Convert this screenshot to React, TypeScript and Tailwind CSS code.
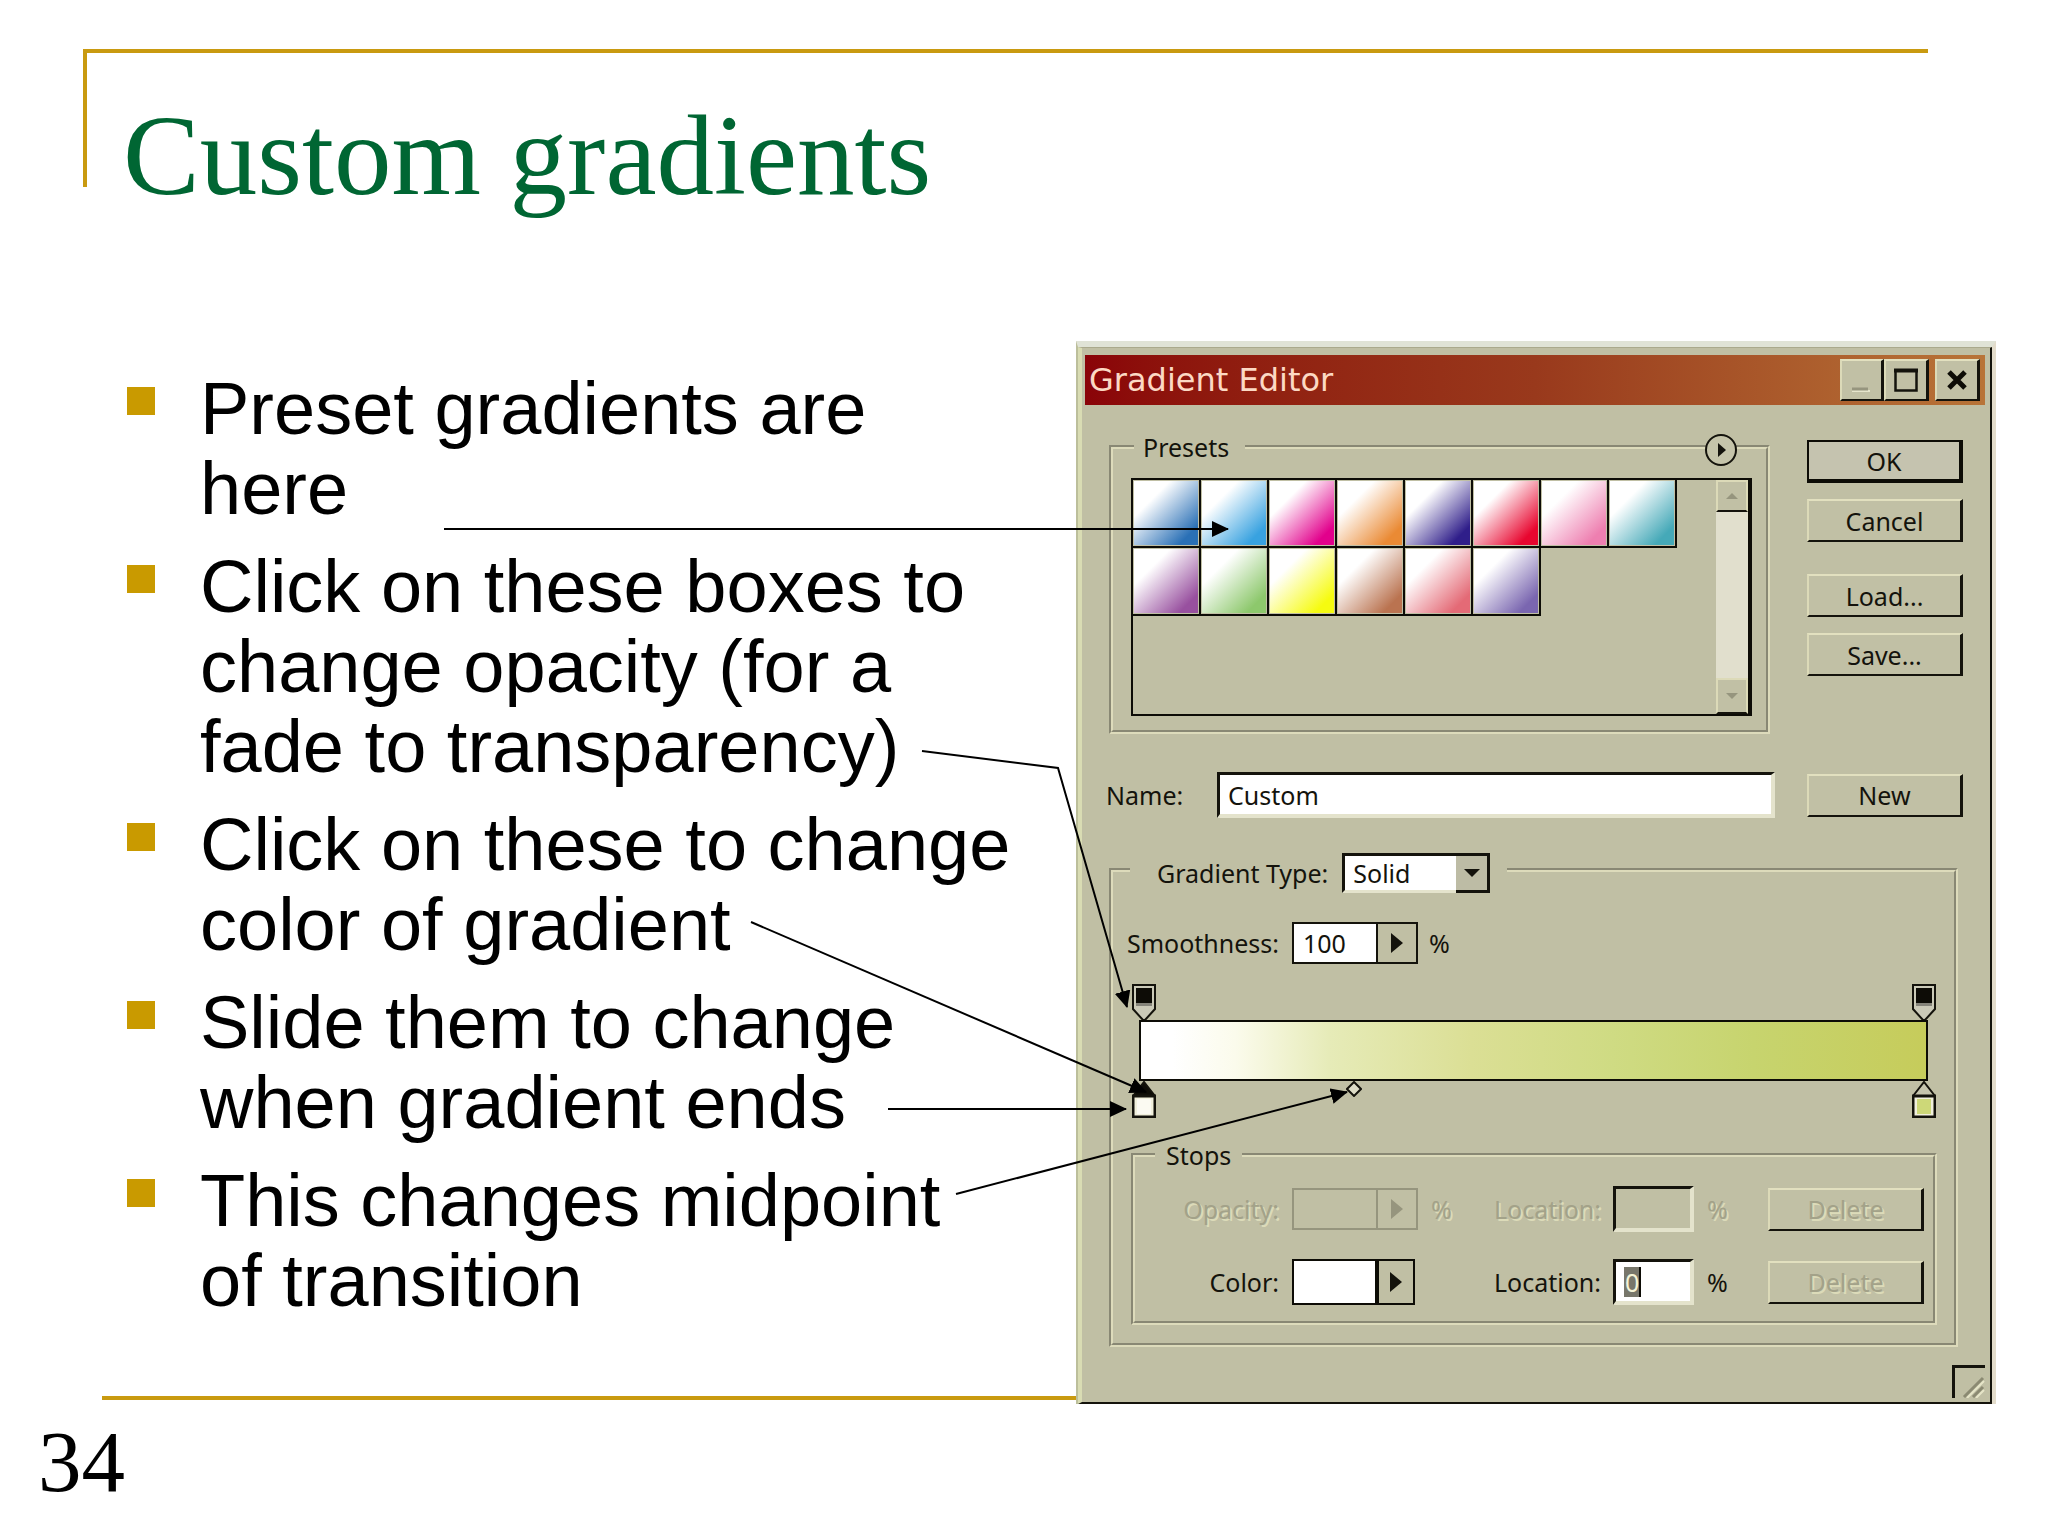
import React from "react";

// ─── Slide content ───────────────────────────────────────────────────────────

const BULLETS = [
  "Preset gradients are\nhere",
  "Click on these boxes to\nchange opacity (for a\nfade to transparency)",
  "Click on these to change\ncolor of gradient",
  "Slide them to change\nwhen gradient ends",
  "This changes midpoint\nof transition",
];

const PRESETS = [
  { name: "Blue", color: "#2a70b6" },
  { name: "Cyan", color: "#38a2e0" },
  { name: "Magenta", color: "#e2008c" },
  { name: "Orange", color: "#ea8a34" },
  { name: "Indigo", color: "#2f1e8a" },
  { name: "Red", color: "#e8062f" },
  { name: "Pink", color: "#ee7fb0" },
  { name: "Teal", color: "#45a9b8" },
  { name: "Purple", color: "#98509f" },
  { name: "Green", color: "#8dc86c" },
  { name: "Yellow", color: "#f6fb10" },
  { name: "Brown", color: "#ba7350" },
  { name: "Coral", color: "#e46a76" },
  { name: "Violet", color: "#7a66b0" },
];

// ─── Shared styles ───────────────────────────────────────────────────────────

const RAISED =
  "border-t-2 border-l-2 border-r-[3px] border-b-2 border-t-[#e2e0bf] border-l-[#dcdab8] border-r-[#14130c] border-b-[#14130c] bg-[#c1c0a5]";
const SUNKEN =
  "border-t-[3px] border-l-[3px] border-r-4 border-b-4 border-t-[#14130c] border-l-[#14130c] border-r-[#e4e3cc] border-b-[#e4e3cc]";
const GROOVE = "border-4 [border-style:groove] border-[#dddbbb]";
const DISABLED = "text-[#a3a289] [text-shadow:2px_2px_#dcdbb9]";

// ─── Small controls ──────────────────────────────────────────────────────────

const DialogButton: React.FC<{ label: string; primary?: boolean; disabled?: boolean }> = ({
  label,
  primary,
  disabled,
}) => (
  <button
    type="button"
    disabled={disabled}
    className={`flex h-[43px] w-[156px] items-center justify-center ${
      primary
        ? "border-t-2 border-r-4 border-b-4 border-l-2 border-[#0d0c06] bg-[#c5c3af]"
        : RAISED
    } ${disabled ? DISABLED : ""}`}
  >
    {label}
  </button>
);

const RightTriangle: React.FC<{ className?: string }> = ({ className = "h-5 w-3 fill-[#14130c]" }) => (
  <svg viewBox="0 0 12 20" className={className} aria-hidden="true">
    <path d="M0 0 L12 10 L0 20 Z" />
  </svg>
);

const OpacityStop: React.FC<{ label: string }> = ({ label }) => (
  <button type="button" aria-label={label} className="h-9 w-6">
    <svg viewBox="0 0 24 36" className="h-9 w-6">
      <path d="M1 1 H23 V25 L13 36 H11 L1 25 Z" fill="#cbcab8" stroke="#14130c" strokeWidth="2" />
      <rect x="4" y="4" width="16" height="15" fill="#0d0c06" />
      <rect x="4" y="19" width="16" height="3" fill="#85847a" />
    </svg>
  </button>
);

const ColorStop: React.FC<{ label: string; color: string; selected?: boolean }> = ({
  label,
  color,
  selected,
}) => (
  <button type="button" aria-label={label} className="h-[37px] w-6">
    <svg viewBox="0 0 24 37" className="h-[37px] w-6">
      <path
        d="M1 15 L12 1 L23 15 Z"
        fill={selected ? "#0d0c06" : "#c6c5ad"}
        stroke="#14130c"
        strokeWidth="2"
      />
      <rect x="1" y="15" width="22" height="21" fill="#f1f0dc" stroke="#14130c" strokeWidth="3" />
      <rect x="5" y="18" width="14" height="15" fill={color} />
    </svg>
  </button>
);

// ─── Gradient editor dialog ──────────────────────────────────────────────────

const TitleBar: React.FC = () => (
  <div className="flex h-[50px] items-center justify-between bg-linear-to-r from-[#8a0308] via-[#99391c] to-[#b87438] pr-[5px] pl-1">
    <h2 className="font-['DejaVu_Sans',sans-serif] text-[32px] leading-10 text-[#fcd9c4]">
      Gradient Editor
    </h2>
    <div className="flex">
      <button
        type="button"
        disabled
        aria-label="Minimize"
        className={`flex h-[42px] w-11 items-center justify-center ${RAISED}`}
      >
        <svg viewBox="0 0 24 24" className="h-6 w-6">
          <path d="M2 23 H20" stroke="#e6e5cc" strokeWidth="2" />
          <path d="M2 21 H18" stroke="#96957e" strokeWidth="3" />
        </svg>
      </button>
      <button
        type="button"
        aria-label="Maximize"
        className={`flex h-[42px] w-[45px] items-center justify-center ${RAISED}`}
      >
        <svg viewBox="0 0 24 24" className="h-6 w-6">
          <path d="M1.5 2 V22.5 H22.5 V2" fill="none" stroke="#14130c" strokeWidth="2.5" />
          <path d="M0 2.5 H24" stroke="#14130c" strokeWidth="4" />
        </svg>
      </button>
      <button
        type="button"
        aria-label="Close"
        className={`ml-[6px] flex h-[42px] w-[45px] items-center justify-center ${RAISED}`}
      >
        <svg viewBox="0 0 20 20" className="h-5 w-5">
          <path d="M2 2 L18 18 M18 2 L2 18" stroke="#0d0c06" strokeWidth="5" />
        </svg>
      </button>
    </div>
  </div>
);

const PresetsGroup: React.FC = () => (
  <div className="relative ml-[3px] w-[661px]">
    <fieldset className={`${GROOVE} pt-[17px] pr-[14px] pb-[14px] pl-[18px]`}>
      <legend className="ml-[3px] pr-4 pl-[9px] leading-7">Presets</legend>
      <div className="flex h-[238px] justify-between border-2 border-r-4 border-[#0d0c06]">
        <div className="grid auto-rows-[68px] grid-cols-[repeat(8,68px)]">
          {PRESETS.map((preset) => (
            <button
              key={preset.name}
              type="button"
              aria-label={preset.name}
              className="border-r-2 border-b-2 border-[#0d0c06] p-px"
            >
              <span
                className="block h-full"
                style={{
                  background: `linear-gradient(135deg, #fff 28%, ${preset.color} 85%)`,
                }}
              />
            </button>
          ))}
        </div>
        <div className="flex w-8 flex-col bg-[#e1dfcd]">
          <button
            type="button"
            aria-label="Scroll up"
            className="flex h-8 items-center justify-center border-2 border-[#dcdab8] border-b-[#14130c] bg-[#c1c0a5]"
          >
            <svg viewBox="0 0 12 6" className="h-[6px] w-3 fill-[#96957e]">
              <path d="M0 6 L6 0 L12 6 Z" />
            </svg>
          </button>
          <button
            type="button"
            aria-label="Scroll down"
            className="mt-auto flex h-9 items-center justify-center border-2 border-[#dcdab8] border-b-[#14130c] bg-[#c1c0a5]"
          >
            <svg viewBox="0 0 12 6" className="h-[6px] w-3 fill-[#96957e]">
              <path d="M0 0 L6 6 L12 0 Z" />
            </svg>
          </button>
        </div>
      </div>
    </fieldset>
    <button type="button" aria-label="Presets menu" className="absolute top-[1px] right-[33px]">
      <svg viewBox="0 0 32 32" className="h-8 w-8">
        <circle cx="16" cy="16" r="15" fill="#c5c4aa" stroke="#14130c" strokeWidth="2" />
        <path d="M13 9 L21 16 L13 23 Z" fill="#14130c" />
      </svg>
    </button>
  </div>
);

const StopsGroup: React.FC = () => (
  <fieldset className={`mt-[23px] mr-[17px] ml-[18px] ${GROOVE} pt-[17px] pr-2 pb-4`}>
    <legend className="ml-5 px-[11px] leading-7">Stops</legend>
    <div className="grid auto-rows-[46px] grid-cols-[144px_126px_50px_106px_81px_48px_156px] items-center gap-x-[13px] gap-y-[27px]">
      <label htmlFor="opacity" className={`text-right ${DISABLED}`}>
        Opacity:
      </label>
      <div className="flex h-[42px] border-2 border-[#96957e]">
        <input id="opacity" disabled className="w-[82px] bg-transparent px-2" />
        <button
          type="button"
          disabled
          aria-label="Opacity slider"
          className="flex flex-1 items-center justify-center border-l-2 border-[#96957e]"
        >
          <RightTriangle className="h-5 w-3 fill-[#96957e]" />
        </button>
      </div>
      <span className={DISABLED}>%</span>
      <label htmlFor="opacity-location" className={`text-right ${DISABLED}`}>
        Location:
      </label>
      <input id="opacity-location" disabled className={`h-[46px] w-full bg-transparent ${SUNKEN}`} />
      <span className={DISABLED}>%</span>
      <DialogButton label="Delete" disabled />

      <span className="text-right">Color:</span>
      <div className="flex h-[46px] w-[123px] border-2 border-[#0d0c06]">
        <button type="button" aria-label="Stop color" className="w-[81px] bg-white" />
        <button
          type="button"
          aria-label="Color menu"
          className="flex flex-1 items-center justify-center border-l-4 border-[#0d0c06]"
        >
          <RightTriangle className="h-6 w-3 fill-[#14130c]" />
        </button>
      </div>
      <span />
      <label htmlFor="color-location" className="text-right">
        Location:
      </label>
      <input
        id="color-location"
        defaultValue="0"
        className={`h-[46px] w-full bg-white bg-[linear-gradient(90deg,#77766a_15px,#0d0c06_15px)] bg-[length:17px_30px] bg-[position:8px_center] bg-no-repeat pl-[9px] text-[#f4f3d6] ${SUNKEN}`}
      />
      <span>%</span>
      <DialogButton label="Delete" disabled />
    </div>
  </fieldset>
);

const GradientGroup: React.FC = () => (
  <fieldset className={`mt-[33px] mr-[5px] ml-[3px] ${GROOVE} pt-[33px] pb-[18px]`}>
    <legend className="ml-[17px] h-[38px] pt-[2px] pr-[17px] pl-[27px]">
      <div className="flex items-center gap-[14px]">
        <label htmlFor="gradient-type">Gradient Type:</label>
        <div className="relative">
          <select
            id="gradient-type"
            className="block h-10 w-[148px] appearance-none border-[3px] border-[#14130c] border-b-[#e4e3cc] bg-white pl-2"
          >
            <option>Solid</option>
          </select>
          <span className="pointer-events-none absolute top-[3px] right-0 bottom-0 flex w-[34px] items-center justify-center border-r-[3px] border-b-[3px] border-[#14130c] bg-[#bdbca5]">
            <svg viewBox="0 0 16 8" className="h-2 w-4 fill-[#14130c]">
              <path d="M0 0 H16 L8 8 Z" />
            </svg>
          </span>
        </div>
      </div>
    </legend>

    <div className="flex items-center">
      <label htmlFor="smoothness" className="w-[166px] text-right">
        Smoothness:
      </label>
      <div className="ml-[13px] flex h-[42px] w-[126px] border-2 border-[#14130c]">
        <input id="smoothness" defaultValue="100" className="w-[82px] bg-white pl-[9px]" />
        <button
          type="button"
          aria-label="Smoothness slider"
          className="flex flex-1 items-center justify-center border-l-2 border-[#14130c]"
        >
          <RightTriangle />
        </button>
      </div>
      <span className="ml-[11px]">%</span>
    </div>

    {/* Gradient ramp with its stops */}
    <div className="mt-5 mr-[18px] ml-[19px]">
      <div className="flex justify-between">
        <OpacityStop label="Left opacity stop" />
        <OpacityStop label="Right opacity stop" />
      </div>
      <div className="mr-2 ml-[7px] h-[61px] border-2 border-[#0d0c06] bg-[linear-gradient(90deg,#ffffff_4%,#fbfbec_12%,#e6ebb8_24%,#dbdf95_42%,#cfdb83_60%,#c7d46e_78%,#c6cc5b_100%)]" />
      <div className="relative flex justify-between">
        <ColorStop label="Left color stop" color="#fbfaf2" selected />
        <ColorStop label="Right color stop" color="#cdd878" />
        <button type="button" aria-label="Midpoint" className="absolute top-0 left-[214px]">
          <svg viewBox="0 0 16 16" className="h-4 w-4">
            <path d="M8 1 L15 8 L8 15 L1 8 Z" fill="#dddcc6" stroke="#14130c" strokeWidth="2" />
          </svg>
        </button>
      </div>
    </div>

    <StopsGroup />
  </fieldset>
);

const GradientEditor: React.FC = () => (
  <section
    aria-label="Gradient Editor"
    className="border-t-[6px] border-r-4 border-l-2 border-t-[#e0e3d6] border-r-[#e3dccb] border-l-[#bcbf9b] font-['Noto_Sans',sans-serif] text-[25px] leading-8 text-[#14130c]"
  >
    <div className="border-t border-r-2 border-b-2 border-l-4 border-t-[#aaa98c] border-r-[#14130c] border-b-[#14130c] border-l-[#d9dcb3] bg-[#c0bfa4] pt-[7px] pr-[5px] pb-1 pl-[3px]">
      <TitleBar />
      <div className="pt-7 pr-[22px] pl-[21px]">
        <div className="flex justify-between">
          <PresetsGroup />
          <div className="flex flex-col pt-[7px]">
            <DialogButton label="OK" primary />
            <div className="mt-4">
              <DialogButton label="Cancel" />
            </div>
            <div className="mt-8">
              <DialogButton label="Load..." />
            </div>
            <div className="mt-4">
              <DialogButton label="Save..." />
            </div>
          </div>
        </div>
        <div className="mt-[38px] flex items-center">
          <label htmlFor="gradient-name" className="w-[111px]">
            Name:
          </label>
          <input
            id="gradient-name"
            defaultValue="Custom"
            className={`mr-8 h-[46px] min-w-0 flex-1 bg-white pl-2 ${SUNKEN}`}
          />
          <DialogButton label="New" />
        </div>
        <GradientGroup />
      </div>
      <div className="mt-[18px] flex justify-end">
        <svg viewBox="0 0 33 33" className="h-[33px] w-[33px]" aria-hidden="true">
          <path d="M1.5 33 V1.5 H33" fill="none" stroke="#14130c" strokeWidth="3" />
          <path d="M12 32 L31 13 M21 32 L31 22" stroke="#8b8a72" strokeWidth="3" />
          <path d="M15 33 L32 16 M24 33 L32 25" stroke="#e6e5c8" strokeWidth="2" />
        </svg>
      </div>
    </div>
  </section>
);

// ─── Callout arrows ──────────────────────────────────────────────────────────

const CalloutArrows: React.FC = () => (
  <svg
    viewBox="0 0 2048 1536"
    className="pointer-events-none absolute top-0 left-0 w-full"
    fill="none"
    stroke="#000"
    strokeWidth="2"
    aria-hidden="true"
  >
    <defs>
      <marker
        id="arrowhead"
        markerUnits="userSpaceOnUse"
        markerWidth="17"
        markerHeight="16"
        refX="16"
        refY="8"
        orient="auto"
      >
        <path d="M0 0 L17 8 L0 16 Z" fill="#000" stroke="none" />
      </marker>
    </defs>
    <path d="M444 529 H1228" markerEnd="url(#arrowhead)" />
    <path d="M922 751 L1058 768 L1127 1007" markerEnd="url(#arrowhead)" />
    <path d="M751 922 L1146 1092" markerEnd="url(#arrowhead)" />
    <path d="M888 1109 H1126" markerEnd="url(#arrowhead)" />
    <path d="M956 1194 L1347 1092" markerEnd="url(#arrowhead)" />
  </svg>
);

// ─── Slide ───────────────────────────────────────────────────────────────────

const App: React.FC = () => {
  return (
    <main className="relative flex min-h-screen flex-col bg-white">
      <header className="mt-[49px] mr-[120px] ml-[83px] h-[138px] border-t-4 border-l-4 border-[#c99a10] pt-[39px] pl-9">
        <h1 className="font-['Liberation_Serif',serif] text-[115px] leading-[128px] whitespace-nowrap text-[#006633]">
          Custom gradients
        </h1>
      </header>

      <div className="mt-[154px] mr-[52px] ml-[102px] grid grid-cols-[1fr_920px]">
        <div className="flex flex-col pt-7">
          <ul className="flex flex-col gap-[18px] pl-[25px] font-['Liberation_Sans',sans-serif] text-[74px] leading-[80px] text-black">
            {BULLETS.map((text) => (
              <li key={text} className="flex gap-[45px]">
                <span className="mt-[18px] h-7 w-7 shrink-0 bg-[#c99a00]" />
                <span className="whitespace-pre">{text}</span>
              </li>
            ))}
          </ul>
          <div className="mt-auto mb-1 h-1 bg-[#c99a10]" />
        </div>
        <GradientEditor />
      </div>

      <footer className="mt-[10px] pl-[38px] font-['Liberation_Serif',serif] text-[87px] leading-[96px] text-black">
        34
      </footer>

      <CalloutArrows />
    </main>
  );
};

export default App;
